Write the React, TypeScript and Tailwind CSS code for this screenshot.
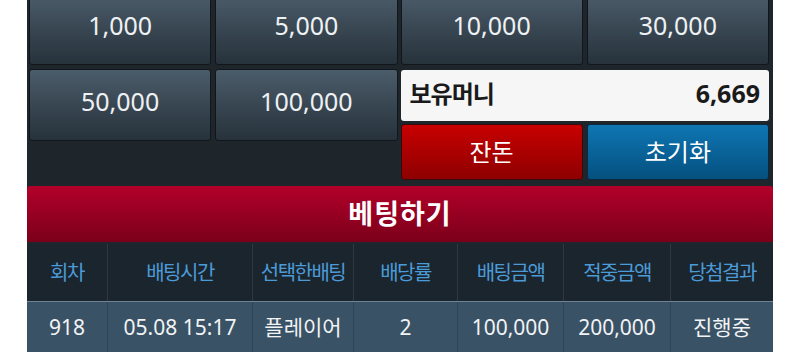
const font = { fontFamily: '"Noto Sans", "Noto Sans CJK KR", sans-serif' };

const ChipButton = ({ label, className = "" }: { label: string; className?: string }) => (
  <button
    className={`flex items-center justify-center rounded-[3px] border border-[#10161b] bg-gradient-to-b from-[#4b5c6a] to-[#27323b] pb-[6px] text-[25px] text-[#eef1f3] ${className}`}
  >
    {label}
  </button>
);

const columns = ["회차", "배팅시간", "선택한배팅", "배당률", "배팅금액", "적중금액", "당첨결과"];
const widths = ["w-[81px]", "w-[145px]", "w-[101px]", "w-[104px]", "w-[106px]", "w-[107px]", "flex-1"];

const BetPanel = () => {
  const row = ["918", "05.08 15:17", "플레이어", "2", "100,000", "200,000", "진행중"];

  return (
    <div className="h-[352px] w-[800px] overflow-hidden bg-white" style={font}>
      <div className="mx-[27px] -mt-[7px] bg-[#1e252b]">
        {/* 칩 버튼 + 보유머니 */}
        <div className="flex gap-[3px] pl-[2px] pr-[4px]">
          <div className="grid flex-1 grid-cols-2 grid-rows-[72px_72px] gap-[4px]">
            <ChipButton label="1,000" />
            <ChipButton label="5,000" />
            <ChipButton label="50,000" />
            <ChipButton label="100,000" />
          </div>
          <div className="flex flex-1 flex-col">
            <div className="grid h-[72px] grid-cols-2 gap-[4px]">
              <ChipButton label="10,000" />
              <ChipButton label="30,000" />
            </div>
            <div className="mt-[5px] flex h-[51px] items-center justify-between rounded-[3px] bg-[#f6f6f7] px-[9px] pb-[3px] text-[24px] font-bold text-[#1a1a1a]">
              <span className="tracking-[-1px]">보유머니</span>
              <span className="text-[25px]">6,669</span>
            </div>
            <div className="mt-[3px] grid h-[56px] grid-cols-2 gap-[4px]">
              <button className="flex items-center justify-center rounded-[3px] border border-[#3a0a0a] bg-gradient-to-b from-[#c80000] to-[#8e0000] text-[24px] text-white">
                잔돈
              </button>
              <button className="flex items-center justify-center rounded-[3px] border border-[#0a2a40] bg-gradient-to-b from-[#0f76b3] to-[#05507f] text-[24px] text-white">
                초기화
              </button>
            </div>
          </div>
        </div>

        {/* 베팅하기 */}
        <div className="mt-[6px] flex h-[56px] items-center justify-center rounded-t-[3px] bg-gradient-to-b from-[#b3002b] to-[#7b0019] text-[27px] font-bold tracking-[1px] text-white">
          베팅하기
        </div>

        {/* 테이블 */}
        <div className="mt-[2px]">
          <div className="flex h-[58px] border-b border-[#6f8392] bg-[#1b252e]">
            {columns.map((c, i) => (
              <div
                key={c}
                className={`${widths[i]} flex items-center justify-center border-r border-[#2c3843] text-[20px] tracking-[-1.5px] text-[#4b9bd8] last:border-r-0`}
              >
                {c}
              </div>
            ))}
          </div>
          <div className="flex h-[52px] bg-[#3a5265]">
            {row.map((v, i) => (
              <div
                key={i}
                className={`${widths[i]} flex items-center justify-center border-r border-[#2e4555] text-[21px] text-[#f1f3f5] last:border-r-0`}
              >
                {v}
              </div>
            ))}
          </div>
        </div>
      </div>
    </div>
  );
};

export default function App() {
  return <BetPanel />;
}
